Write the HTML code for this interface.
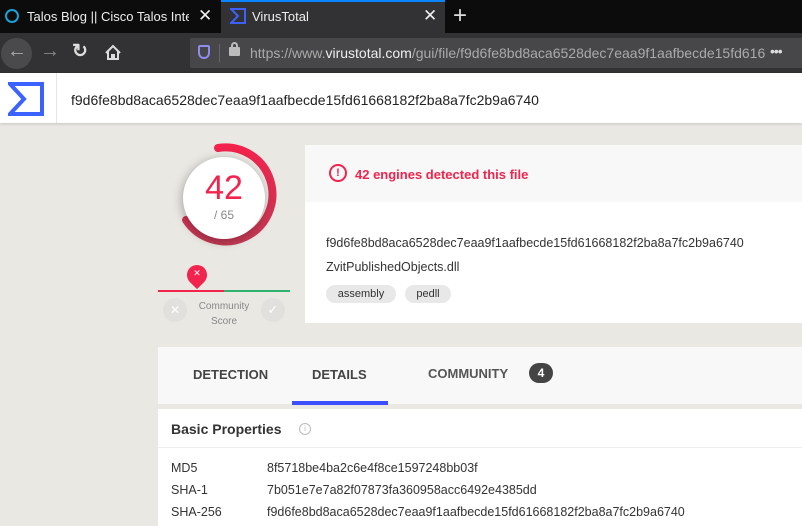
<!DOCTYPE html><html><head><style>
*{margin:0;padding:0;box-sizing:border-box}
html,body{width:802px;height:526px;overflow:hidden}
body{background:#eae8e3;font-family:"Liberation Sans",Arial,sans-serif;position:relative}
.a{position:absolute}
</style></head><body>
<div class="a" style="left:0;top:0;width:802px;height:33px;background:#0c0c0c"></div>
<div class="a" style="left:221px;top:0;width:224px;height:33px;background:#323234;border-top:2px solid #0a84ff"></div>
<div class="a" style="left:5px;top:9px;width:14px;height:14px;border-radius:50%;border:2.5px solid #1ba0d7"></div>
<div class="a" style="left:27px;top:9px;color:#eee;font-size:13px;width:162px;overflow:hidden;white-space:nowrap">Talos Blog || Cisco Talos Intellige</div>
<div class="a" style="left:198px;top:6px;color:#eee;font-size:17px">✕</div>
<svg class="a" style="left:230px;top:8px" width="16" height="16" viewBox="0 0 16 16"><path d="M1 1h14v14H1L8 8z" fill="none" stroke="#3b61ff" stroke-width="2"/></svg>
<div class="a" style="left:252px;top:9px;color:#eee;font-size:13px">VirusTotal</div>
<div class="a" style="left:423px;top:6px;color:#eee;font-size:17px">✕</div>
<div class="a" style="left:453px;top:2px;color:#ddd;font-size:24px">+</div>
<div class="a" style="left:0;top:33px;width:802px;height:40px;background:#323234"></div>
<div class="a" style="left:1px;top:38px;width:31px;height:31px;border-radius:50%;background:#4a4a4c"></div>
<div class="a" style="left:7px;top:40px;color:#aaa;font-size:20px">←</div>
<div class="a" style="left:40px;top:40px;color:#888;font-size:20px">→</div>
<div class="a" style="left:72px;top:40px;color:#ddd;font-size:19px;font-weight:bold">↻</div>
<svg class="a" style="left:104px;top:44px" width="18" height="17" viewBox="0 0 18 17"><path d="M2 9L9 2l7 7M4 7v8h4v-4h2v4h4V7" fill="none" stroke="#ddd" stroke-width="2"/></svg>
<div class="a" style="left:190px;top:38px;width:620px;height:30px;background:#474749;border-radius:2px"></div>
<div class="a" style="left:198px;top:45px;width:12px;height:14px;border:2px solid #8f8cf0;border-radius:2px 2px 6px 6px"></div>
<div class="a" style="left:219px;top:44px;width:1px;height:18px;background:#666"></div>
<div class="a" style="left:229px;top:47px;width:11px;height:9px;background:#bbb;border-radius:1px"></div>
<div class="a" style="left:231px;top:42px;width:7px;height:8px;border:2px solid #bbb;border-radius:4px 4px 0 0"></div>
<div class="a" style="left:250px;top:45px;color:#aaa;font-size:14px;white-space:nowrap;width:518px;overflow:hidden">https://www.<span style="color:#eee">virustotal.com</span>/gui/file/f9d6fe8bd8aca6528dec7eaa9f1aafbecde15fd616</div>
<div class="a" style="left:770px;top:43px;color:#ddd;font-size:14px;letter-spacing:-1px">•••</div>
<div class="a" style="left:0;top:73px;width:802px;height:50px;background:#fff;box-shadow:0 1px 3px rgba(0,0,0,.15)"></div>
<div class="a" style="left:56px;top:73px;width:1px;height:50px;background:#e5e5e5"></div>
<svg class="a" style="left:8px;top:82px" width="36" height="34" viewBox="0 0 36 34"><path d="M2 2h32v30H2L16 17z" fill="none" stroke="#3b61ff" stroke-width="4" stroke-linejoin="miter"/></svg>
<div class="a" style="left:71px;top:92px;color:#222;font-size:14px">f9d6fe8bd8aca6528dec7eaa9f1aafbecde15fd61668182f2ba8a7fc2b9a6740</div>
<svg class="a" style="left:160px;top:130px" width="140" height="130" viewBox="0 0 140 130">
<defs><linearGradient id="g" x1="0" y1="0" x2="0" y2="1"><stop offset="0" stop-color="#f2234d"/><stop offset="1" stop-color="#c43a55"/></linearGradient></defs>
<path d="M58 18 A47 47 0 1 1 26 90" fill="none" stroke="url(#g)" stroke-width="8" stroke-linecap="round"/>
<circle cx="64" cy="68" r="41" fill="#fff" style="filter:drop-shadow(-1px 2px 5px rgba(0,0,0,.3))"/>
</svg>
<div class="a" style="left:184px;top:169px;width:80px;text-align:center;color:#f2234d;font-size:34px">42</div>
<div class="a" style="left:184px;top:208px;width:80px;text-align:center;color:#888;font-size:12px">/ 65</div>
<div class="a" style="left:158px;top:290px;width:66px;height:2px;background:#f2234d"></div>
<div class="a" style="left:224px;top:290px;width:66px;height:2px;background:#2db36f"></div>
<div class="a" style="left:187px;top:265px;width:20px;height:20px;background:#f2234d;border-radius:50% 50% 50% 0;transform:rotate(-45deg)"></div>
<div class="a" style="left:187px;top:268px;width:20px;text-align:center;color:#fff;font-size:9px">✕</div>
<div class="a" style="left:163px;top:298px;width:24px;height:24px;border-radius:50%;background:#e2e0dc;color:#fff;text-align:center;line-height:24px;font-size:12px">✕</div>
<div class="a" style="left:261px;top:298px;width:24px;height:24px;border-radius:50%;background:#e2e0dc;color:#fff;text-align:center;line-height:24px;font-size:13px">✓</div>
<div class="a" style="left:190px;top:299px;width:68px;text-align:center;color:#888;font-size:10px;line-height:15px">Community<br>Score</div>
<div class="a" style="left:305px;top:145px;width:497px;height:178px;background:#fff"></div>
<div class="a" style="left:305px;top:145px;width:497px;height:57px;background:#f8f8f8"></div>
<div class="a" style="left:329px;top:164px;width:18px;height:18px;border-radius:50%;border:2px solid #f2234d;color:#f2234d;font-size:11px;text-align:center;line-height:14px;font-weight:bold">!</div>
<div class="a" style="left:355px;top:167px;color:#f2234d;font-size:13px;font-weight:bold">42 engines detected this file</div>
<div class="a" style="left:326px;top:236px;color:#333;font-size:12.5px">f9d6fe8bd8aca6528dec7eaa9f1aafbecde15fd61668182f2ba8a7fc2b9a6740</div>
<div class="a" style="left:326px;top:260px;color:#333;font-size:12.5px">ZvitPublishedObjects.dll</div>
<div class="a" style="left:326px;top:285px;width:70px;height:18px;border-radius:9px;background:#e8e8e8;color:#333;font-size:11px;text-align:center;line-height:18px">assembly</div>
<div class="a" style="left:405px;top:285px;width:46px;height:18px;border-radius:9px;background:#e8e8e8;color:#333;font-size:11px;text-align:center;line-height:18px">pedll</div>
<div class="a" style="left:158px;top:347px;width:644px;height:57px;background:#f8f8f8"></div>
<div class="a" style="left:193px;top:367px;color:#444;font-size:13px;font-weight:bold">DETECTION</div>
<div class="a" style="left:312px;top:367px;color:#444;font-size:13px;font-weight:bold">DETAILS</div>
<div class="a" style="left:292px;top:401px;width:96px;height:4px;background:#3b4fff"></div>
<div class="a" style="left:428px;top:366px;color:#555;font-size:13px;font-weight:bold">COMMUNITY</div>
<div class="a" style="left:529px;top:363px;width:24px;height:20px;border-radius:10px;background:#444;color:#fff;font-size:12px;font-weight:bold;text-align:center;line-height:20px">4</div>
<div class="a" style="left:158px;top:409px;width:644px;height:117px;background:#fff"></div>
<div class="a" style="left:158px;top:447px;width:644px;height:1px;background:#eee"></div>
<div class="a" style="left:171px;top:421px;color:#333;font-size:14px;font-weight:bold">Basic Properties</div>
<div class="a" style="left:299px;top:423px;width:12px;height:12px;border-radius:50%;border:1px solid #bbb;color:#bbb;font-size:8px;text-align:center;line-height:10px">i</div>
<div class="a" style="left:171px;top:457px;color:#333;font-size:12.5px;line-height:22px">MD5<br>SHA-1<br>SHA-256<br>Vhash</div>
<div class="a" style="left:267px;top:457px;color:#333;font-size:12.5px;line-height:22px">8f5718be4ba2c6e4f8ce1597248bb03f<br>7b051e7e7a82f07873fa360958acc6492e4385dd<br>f9d6fe8bd8aca6528dec7eaa9f1aafbecde15fd61668182f2ba8a7fc2b9a6740<br>025036551616z6zb1fff1f5z2d66</div>
</body></html>
